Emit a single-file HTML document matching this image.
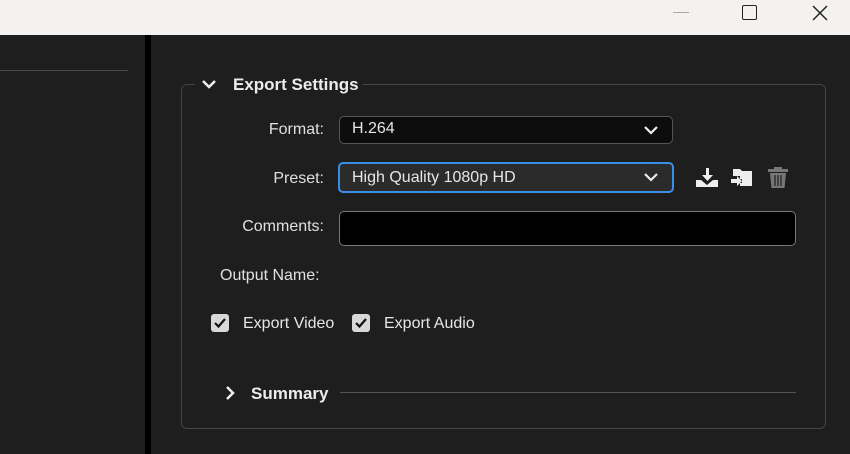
<!DOCTYPE html>
<html><head><meta charset="utf-8"><style>
*{margin:0;padding:0;box-sizing:border-box}
body{width:850px;height:454px;background:#1e1e1e;font-family:"Liberation Sans",sans-serif;color:#e6e6e6;position:relative;overflow:hidden}
.a{position:absolute}
.lbl{font-size:16px;color:#e0e0e0;text-align:right;width:200px}
.dd{border-radius:5px}
</style></head><body>
<div class="a" style="left:0;top:0;width:850px;height:35px;background:#f3f2f1"></div>
<div class="a" style="left:673px;top:12px;width:16px;height:1px;background:#aaa"></div>
<div class="a" style="left:742px;top:5px;width:15px;height:15px;border:1.5px solid #222;border-radius:2px"></div>
<svg class="a" style="left:812px;top:5px" width="16" height="16"><path d="M1 1L15 15M15 1L1 15" stroke="#222" stroke-width="1.5"/></svg>
<div class="a" style="left:145px;top:35px;width:6px;height:419px;background:#000"></div>
<div class="a" style="left:0;top:70px;width:128px;height:1px;background:#4a4a4a"></div>
<div class="a" style="left:181px;top:84px;width:645px;height:345px;border:1px solid #444;border-radius:6px"></div>
<div class="a" style="left:195px;top:72px;width:168px;height:24px;background:#1e1e1e"></div>
<svg class="a" style="left:201px;top:78px" width="16" height="14"><path d="M2 3L8 9L14 3" stroke="#eee" stroke-width="2.5" fill="none"/></svg>
<div class="a" style="left:233px;top:75px;font-size:17px;font-weight:bold;color:#ececec">Export Settings</div>
<div class="a lbl" style="left:124px;top:121px">Format:</div>
<div class="a dd" style="left:339px;top:116px;width:334px;height:28px;background:#0d0d0d;border:1px solid #555"></div>
<div class="a" style="left:352px;top:120px;font-size:16px">H.264</div>
<svg class="a" style="left:643px;top:124px" width="16" height="12"><path d="M2 3L8 9L14 3" stroke="#eee" stroke-width="2.2" fill="none"/></svg>
<div class="a lbl" style="left:124px;top:170px">Preset:</div>
<div class="a dd" style="left:338px;top:162px;width:336px;height:31px;background:#2b2b2b;border:2px solid #3a8ee6"></div>
<div class="a" style="left:352px;top:169px;font-size:16px">High Quality 1080p HD</div>
<svg class="a" style="left:643px;top:171px" width="16" height="12"><path d="M2 3L8 9L14 3" stroke="#eee" stroke-width="2.2" fill="none"/></svg>
<svg class="a" style="left:695px;top:166px" width="24" height="24"><path d="M11 2h3v7h4l-5.5 6L7 9h4z" fill="#eee"/><path d="M1 14h5l6 5 6-5h5v7H1z" fill="#eee"/></svg>
<svg class="a" style="left:730px;top:166px" width="24" height="24"><path d="M3 3h7l2 2h10v15H10v-3h2v-4h-2v-3H3z" fill="#eee"/><path d="M1 13h6v-3l5 5-5 5v-3H1z" fill="#eee"/></svg>
<svg class="a" style="left:767px;top:165px" width="22" height="24"><path d="M7 2h8v2h6v3H1V4h6z" fill="#777"/><path d="M3 8h16l-1.5 15h-13z" fill="#777"/><path d="M8 10v11M11 10v11M14 10v11" stroke="#1e1e1e" stroke-width="1.2"/></svg>
<div class="a lbl" style="left:124px;top:218px">Comments:</div>
<div class="a dd" style="left:339px;top:211px;width:457px;height:35px;background:#000;border:1px solid #777"></div>
<div class="a" style="left:220px;top:267px;font-size:16px;color:#e0e0e0">Output Name:</div>
<div class="a" style="left:211px;top:314px;width:18px;height:18px;background:#d8d8d8;border-radius:3px"></div>
<svg class="a" style="left:211px;top:314px" width="18" height="18"><path d="M4 9l3.5 3.5L14 5" stroke="#111" stroke-width="2.2" fill="none"/></svg>
<div class="a" style="left:243px;top:315px;font-size:16px">Export Video</div>
<div class="a" style="left:352px;top:314px;width:18px;height:18px;background:#d8d8d8;border-radius:3px"></div>
<svg class="a" style="left:352px;top:314px" width="18" height="18"><path d="M4 9l3.5 3.5L14 5" stroke="#111" stroke-width="2.2" fill="none"/></svg>
<div class="a" style="left:384px;top:315px;font-size:16px">Export Audio</div>
<svg class="a" style="left:224px;top:385px" width="12" height="16"><path d="M3 2L9 8L3 14" stroke="#eee" stroke-width="2.5" fill="none"/></svg>
<div class="a" style="left:251px;top:384px;font-size:17px;font-weight:bold;color:#ececec">Summary</div>
<div class="a" style="left:340px;top:392px;width:456px;height:1px;background:#555"></div>
</body></html>
